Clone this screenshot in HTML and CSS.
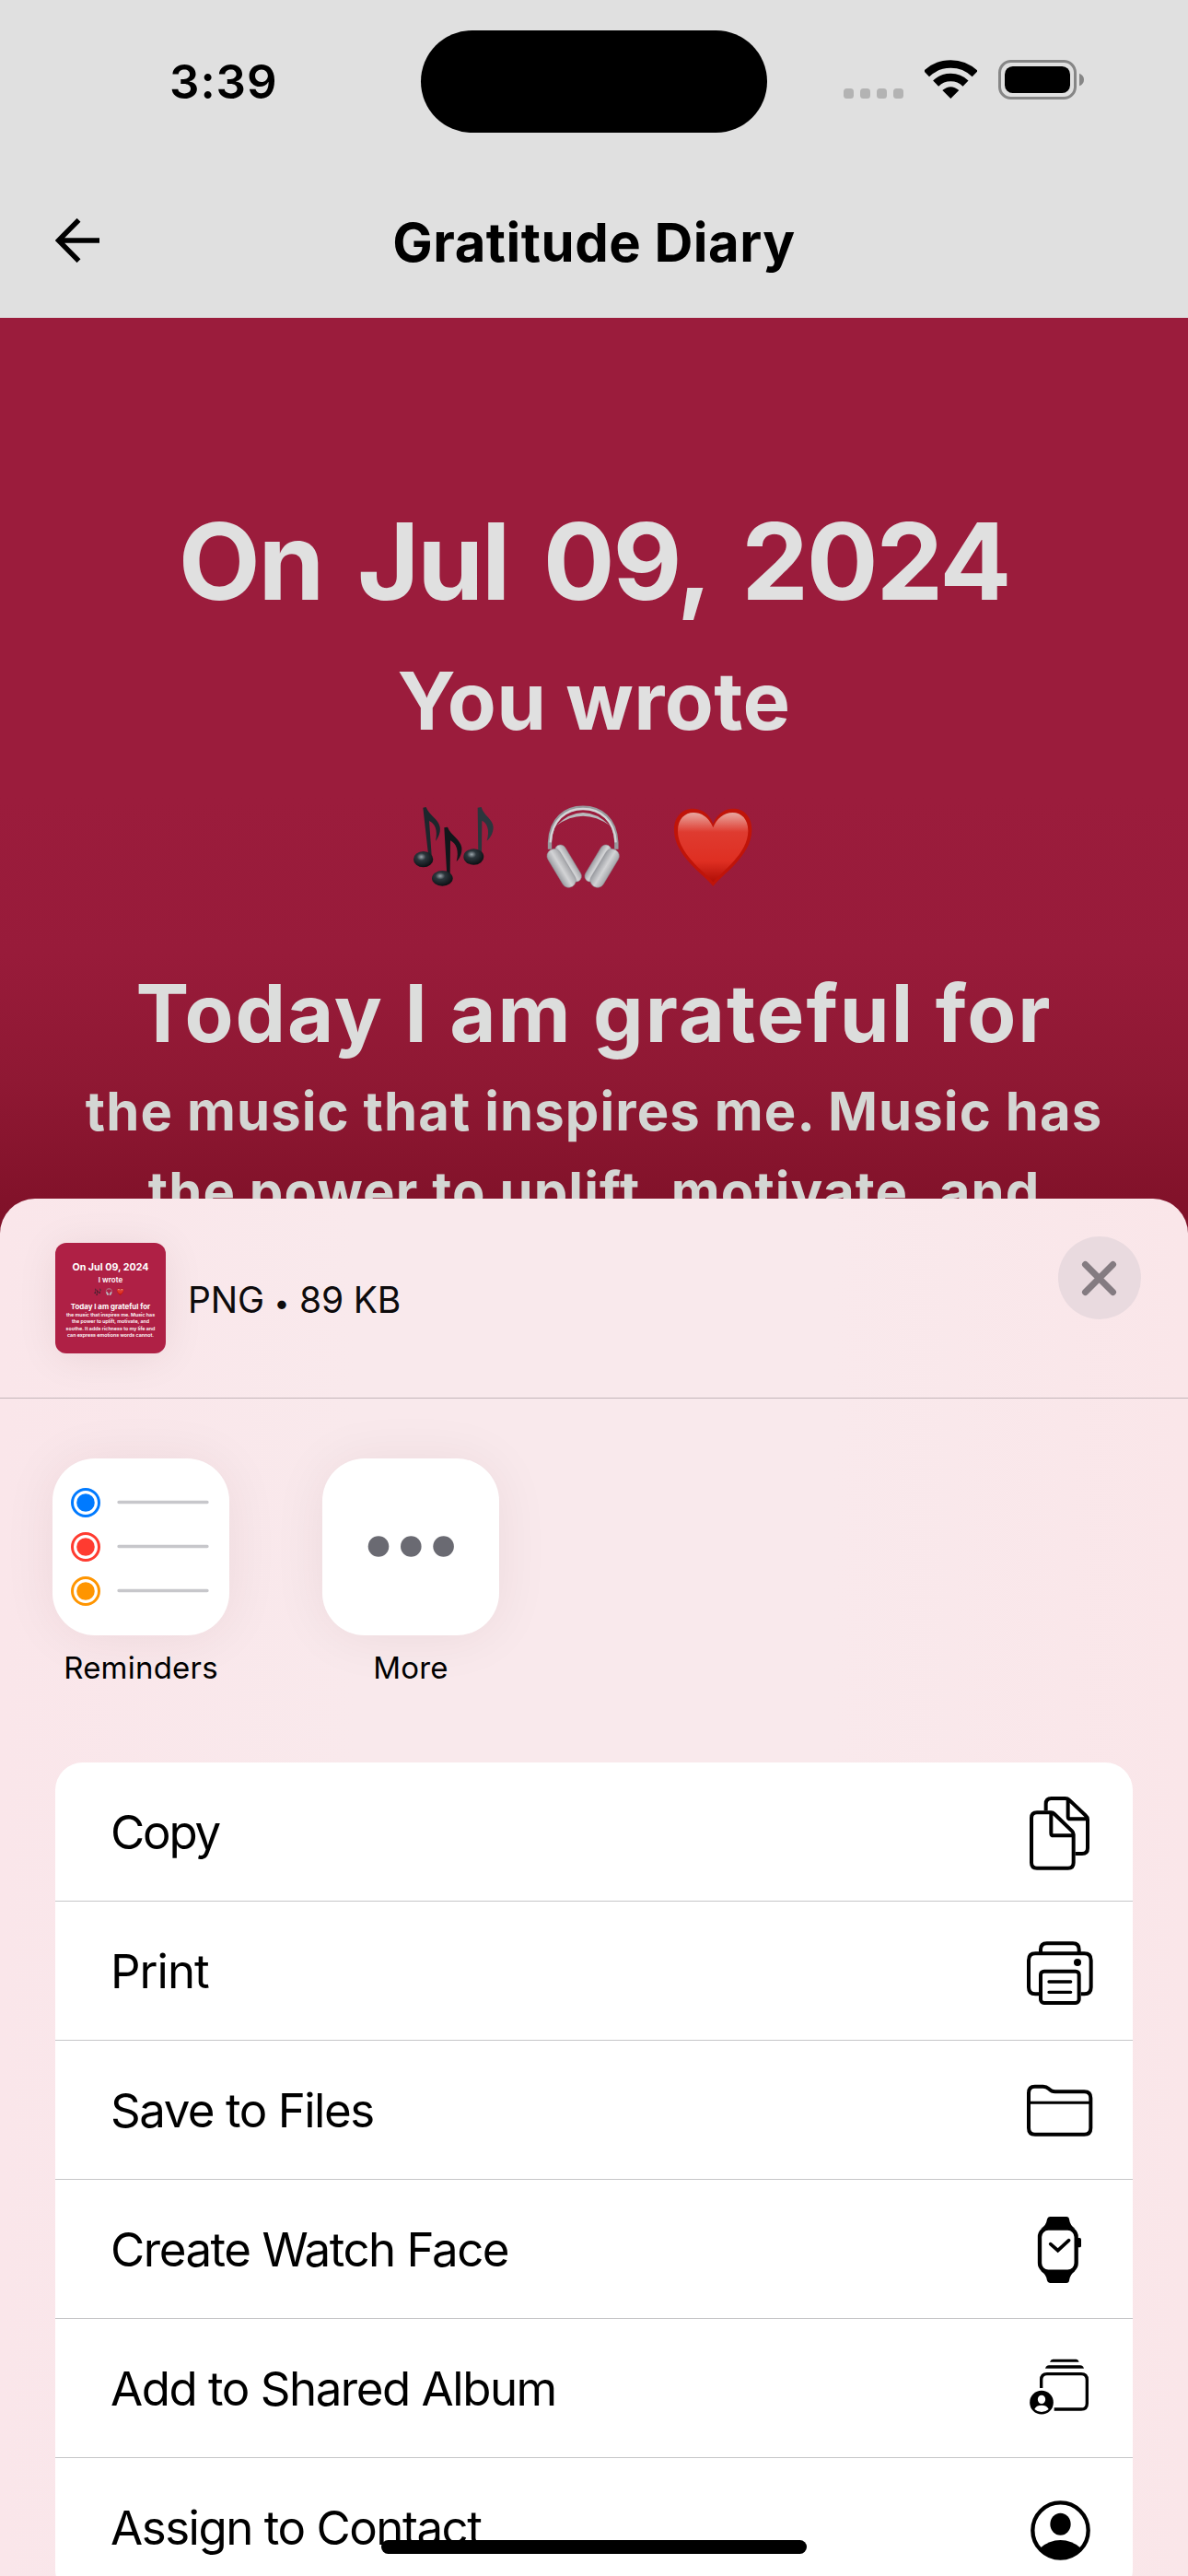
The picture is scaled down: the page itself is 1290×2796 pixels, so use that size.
FILE: index.html
```html
<!DOCTYPE html>
<html lang="en">
<head>
<meta charset="utf-8">
<title>Gratitude Diary</title>
<link rel="stylesheet" href="styles.css">
</head>
<body>
<div class="screen">
  <header class="status">
    <div class="status-time">3:39</div>
    <div class="island"></div>
    <div class="status-icons">
      <svg width="65" height="43" viewBox="0 0 65 43" fill="#b3b3b3"><rect y="31" width="11" height="11" rx="3.5"/><rect x="18" y="31" width="11" height="11" rx="3.5"/><rect x="36" y="31" width="11" height="11" rx="3.5"/><rect x="54" y="31" width="11" height="11" rx="3.5"/></svg>
      <svg width="57" height="43" viewBox="312 45 171 129"><path d="M318 90.4A113.5 113.5 0 0 1 476 90.4M348.400 121.700A70 70 0 0 1 445.600 121.700" fill="none" stroke="#000" stroke-width="26"/><path d="M397 171L370 144Q397 121 424 144Z"/></svg>
      <svg width="93" height="43" viewBox="552 45 279 129"><rect x="556.500" y="49.500" width="246" height="120" rx="37" fill="none" stroke="#868686" stroke-width="9"/><rect x="573" y="66" width="213" height="87" rx="26"/><path d="M816 89Q831 95 831 109.500Q831 124 816 130Z" fill="#868686"/></svg>
    </div>
  </header>
  <nav class="appbar">
    <svg class="back" width="48" height="48" viewBox="0 0 48 48" fill="none" stroke="#000" stroke-width="5.500"><path d="M25.500 1.800L3.500 24L25.500 46.200M3.500 24H48"/></svg>
    <h1 class="appbar-title">Gratitude Diary</h1>
  </nav>
  <main class="diary">
    <h2 class="diary-date">On Jul 09, 2024</h2>
    <p class="diary-sub">You wrote</p>
    <svg class="diary-emojis" width="390" height="115" viewBox="0 0 1170 345">
      <defs>
        <radialGradient id="ball" cx=".4" cy=".35" r=".65"><stop offset="0" stop-color="#9aa5ab"/><stop offset=".35" stop-color="#2c363c"/><stop offset="1" stop-color="#0c1014"/></radialGradient>
        <linearGradient id="silver" x1="0" y1="0" x2="1" y2="0"><stop offset="0" stop-color="#9b9da2"/><stop offset=".5" stop-color="#d3d4d6"/><stop offset="1" stop-color="#a4a5a9"/></linearGradient>
        <linearGradient id="heartfill" x1="0" y1="0" x2="0" y2="1"><stop offset="0" stop-color="#e8a8a0"/><stop offset=".28" stop-color="#df3b30"/><stop offset=".7" stop-color="#df2f22"/><stop offset="1" stop-color="#b00e06"/></linearGradient>
        <g id="emojis">
          <g fill="#1d262c">
            <path d="M58 50L68 48C78 76 108 86 113 113C116 132 106 150 99 159C107 124 97 101 78 93L86 205L76 210Z"/>
            <path d="M127 115L138 113C148 140 180 152 184 180C186 200 176 218 167 225C176 192 167 166 147 157L146 268L136 270Z" fill="#11161a"/>
            <path d="M236 50L248 48C255 76 286 87 287 113C287 133 276 150 266 158C276 124 268 101 250 92L249 200H238Z" fill="#2b363d"/>
          </g>
          <g fill="url(#ball)"><ellipse cx="59" cy="218" rx="32" ry="26"/><ellipse cx="121" cy="280" rx="34" ry="25"/><ellipse cx="223" cy="210" rx="33" ry="26"/></g>
          <path d="M471 185V163C474 87 522 50 579 50C637 50 685 87 688 163V185" fill="none" stroke="#98999d" stroke-width="13"/>
          <path d="M473 163C477 91 523 54 579 54C636 54 682 91 686 163" fill="none" stroke="#d4d5d7" stroke-width="7"/>
          <path d="M492 108Q579 24 667 108Q579 46 492 108Z" fill="#b9babd"/>
          <g fill="url(#silver)" stroke="#929398" stroke-width="1.500">
            <rect x="513" y="164" width="36" height="134" rx="18" transform="rotate(-31 531 231)"/>
            <rect x="486" y="178" width="46" height="138" rx="22" transform="rotate(-31 509 247)"/>
            <rect x="610" y="164" width="36" height="134" rx="18" transform="rotate(31 628 231)"/>
            <rect x="627" y="178" width="46" height="138" rx="22" transform="rotate(31 650 247)"/>
          </g>
          <path d="M1003 306C976 269 876 207 876 122C876 77 904 53 938 53C970 53 993 76 1003 103C1013 76 1036 53 1068 53C1102 53 1129 77 1129 122C1129 207 1030 269 1003 306Z" fill="#c01409"/>
          <path d="M1003 292C974 257 888 199 888 125C888 87 911 66 939 66C970 66 992 87 1003 115C1014 87 1036 66 1067 66C1095 66 1117 87 1117 125C1117 199 1032 257 1003 292Z" fill="url(#heartfill)"/>
        </g>
      </defs>
      <use href="#emojis"/>
    </svg>
    <p class="diary-lead">Today I am grateful for</p>
    <p class="diary-text">the music that inspires me. Music has<br>the power to uplift, motivate, and</p>
  </main>
  <section class="sheet">
    <div class="sheet-head">
      <div class="thumb">
        <div class="thumb-date">On Jul 09, 2024</div>
        <div class="thumb-sub">I wrote</div>
        <svg class="thumb-emojis" width="35" height="10" viewBox="0 0 1170 345"><use href="#emojis"/></svg>
        <div class="thumb-lead">Today I am grateful for</div>
        <div class="thumb-text">the music that inspires me. Music has<br>the power to uplift, motivate, and<br>soothe. It adds richness to my life and<br>can express emotions words cannot.</div>
      </div>
      <div class="file-info">PNG <span class="bullet">•</span> 89 KB</div>
      <div class="close"><svg width="90" height="90" viewBox="0 0 90 90" stroke="#847b81" stroke-width="7" stroke-linecap="round"><path d="M29.500 30.500L59.500 60.500M59.500 30.500L29.500 60.500"/></svg></div>
    </div>
    <div class="apps">
      <div class="app">
        <div class="tile">
          <svg width="192" height="192" viewBox="0 0 192 192">
            <g fill="none" stroke-width="3"><circle cx="36" cy="48" r="14.500" stroke="#007aff"/><circle cx="36" cy="96" r="14.500" stroke="#ff3b30"/><circle cx="36" cy="144" r="14.500" stroke="#ff9500"/></g>
            <circle cx="36" cy="48" r="9.800" fill="#007aff"/><circle cx="36" cy="96" r="9.800" fill="#ff3b30"/><circle cx="36" cy="144" r="9.800" fill="#ff9500"/>
            <path d="M72 47.500H168M72 95.500H168M72 143.500H168" stroke="#c7c7cb" stroke-width="3.300" stroke-linecap="round"/>
          </svg>
        </div>
        <div class="app-name">Reminders</div>
      </div>
      <div class="app">
        <div class="tile">
          <svg width="192" height="192" viewBox="0 0 192 192" fill="#6a6a72"><circle cx="61" cy="95.500" r="11.300"/><circle cx="96.300" cy="95.500" r="11.300"/><circle cx="131.600" cy="95.500" r="11.300"/></svg>
        </div>
        <div class="app-name">More</div>
      </div>
    </div>
    <ul class="actions">
      <li class="action"><span class="tight">Copy</span>
        <svg class="icon" viewBox="90 39 243 450"><path d="M138 202H184Q190 202 195 207L252 262Q257 267 257 273V365Q257 383 239 383H138Q120 383 120 365V220Q120 202 138 202ZM184 202V269Q184 277 192 277H257"/><path d="M167 196V174Q167 156 185 156H230Q238 156 243 161L297 212Q303 217 303 224V318Q303 336 285 336H263M239 156V215Q239 223 247 223H303"/></svg></li>
      <li class="action"><span class="loose">Print</span>
        <svg class="icon" viewBox="90 492 243 450"><path d="M144 793H133Q111 793 111 771V683Q111 661 133 661H292Q314 661 314 683V771Q314 793 292 793H281"/><rect x="150" y="719" width="125" height="103" rx="11"/><path d="M150 661V648Q150 628 170 628H255Q275 628 275 648V661"/><path d="M177 753H248M177 787H248" stroke-width="10" stroke-linecap="round"/><circle class="solid" cx="270" cy="690" r="12"/></svg></li>
      <li class="action"><span>Save to Files</span>
        <svg class="icon" viewBox="90 945 243 450"><path d="M131 1094H158Q168 1094 177 1102Q186 1111 197 1111H292Q313 1111 313 1132V1229Q313 1250 292 1250H132Q111 1250 111 1229V1115Q111 1094 131 1094Z"/><path d="M111 1147H313" stroke-width="9"/></svg></li>
      <li class="action"><span>Create Watch Face</span>
        <svg class="icon" viewBox="90 48 243 450"><rect x="147" y="206" width="119" height="141" rx="28" stroke-width="13"/><path class="solid" d="M180 168H234Q242 168 243 176Q246 197 262 206H151Q168 197 171 176Q173 168 180 168ZM180 384H234Q242 384 243 376Q246 355 262 346H151Q168 355 171 376Q173 384 180 384Z"/><rect class="solid" x="268" y="237" width="14" height="31" rx="5"/><path d="M182 257L206 278L242 245" stroke-width="11" stroke-linecap="round"/></svg></li>
      <li class="action"><span>Add to Shared Album</span>
        <svg class="icon" viewBox="90 501 243 450"><path d="M152 726V699Q152 680 171 680H282Q301 680 301 699V776Q301 795 282 795H194" stroke-width="10"/><path class="solid" d="M165 662Q169 652 177 652H279Q287 652 291 662ZM180 641Q183 632 190 632H266Q272 632 275 641Z"/><circle class="solid" cx="153" cy="773" r="38.500"/><path class="hole" d="M153 749A12.500 14 0 0 1 153 777A12.500 14 0 0 1 153 749ZM130 795Q135 782 153 782Q171 782 176 795Q166 804 153 804Q140 804 130 795Z"/></svg></li>
      <li class="action"><span>Assign to Contact</span>
        <svg class="icon" viewBox="90 954 243 450"><circle cx="214.500" cy="1186.500" r="90.500" stroke-width="13"/><ellipse class="solid" cx="214.500" cy="1166.500" rx="33.500" ry="36"/><path class="solid" d="M148 1244Q178 1218 214.500 1218Q251 1218 281 1244Q252 1279 214.500 1279Q177 1279 148 1244Z"/></svg></li>
    </ul>
  </section>
  <div class="home-indicator"></div>
</div>
</body>
</html>
```
FILE: styles.css
```css
* { box-sizing: border-box; }

body {
  margin: 0;
  background: #e0e0e0;
  color: #000;
  font-family: Inter, "Liberation Sans", sans-serif;
}

h1, h2, p, ul { margin: 0; padding: 0; font-weight: inherit; }

svg { display: block; flex: none; }

.screen {
  position: relative;
  width: 1290px;
  height: 2796px;
  overflow: hidden;
}

/* Status bar */
.status {
  display: grid;
  grid-template-columns: 457px 376px 1fr;
  align-items: center;
  height: 177px;
}
.status-time {
  padding-left: 184px;
  font-size: 51px;
  font-weight: 600;
  letter-spacing: 0.95px;
  line-height: 60px;
}
.island { height: 111px; border-radius: 56px; background: #000; }
.status-icons { display: flex; gap: 23px; padding: 0 0 4px 83px; }

/* App bar */
.appbar {
  display: grid;
  grid-template-columns: 150px 1fr 150px;
  align-items: center;
  height: 168px;
}
.back { margin-left: 60px; }
.appbar-title {
  padding-top: 4px;
  text-align: center;
  font-size: 58px;
  font-weight: 700;
  letter-spacing: 0.5px;
}

/* Diary page, dimmed towards the share sheet */
.diary {
  height: 1010px;
  padding-top: 194px;
  overflow: hidden;
  text-align: center;
  white-space: nowrap;
  font-weight: 700;
  color: #e0e0e0;
  background: linear-gradient(#9b1c3c 520px, #981b3a 690px, #8f1833 830px, #82122a 956px, #7d1128);
}
.diary-date { font-size: 115.5px; line-height: 140px; letter-spacing: -2.2px; word-spacing: 12.5px; }
.diary-sub { margin-top: 29px; font-size: 86.6px; line-height: 105px; letter-spacing: 0.36px; }
.diary-emojis { margin: 47px auto 72px 440px; }
.diary-lead { font-size: 86.6px; line-height: 105px; letter-spacing: 1.98px; color: #dcdddc; }
.diary-text { margin-top: 11px; font-size: 58px; line-height: 87px; letter-spacing: 1.1px; color: #d4d6d3; }

/* Share sheet */
.sheet {
  position: relative;
  height: 1549px;
  margin-top: -54px;
  border-radius: 38px 38px 0 0;
  background: linear-gradient(90deg, #fae6ea, #f9e9ec 30%, #f9e9ec 70%, #fae6e9);
}
.sheet-head {
  display: flex;
  align-items: flex-start;
  height: 217px;
  padding: 41px 51px 0 60px;
  border-bottom: 1px solid #c4b6ba;
}
.thumb {
  width: 120px;
  height: 120px;
  margin-top: 7px;
  padding-top: 20px;
  border-radius: 12px;
  background: #af2045;
  box-shadow: 0 4px 45px rgba(60, 20, 30, 0.08);
  color: #fff;
  text-align: center;
  white-space: nowrap;
  font-weight: 700;
}
.thumb-date { font-size: 10.7px; line-height: 14px; }
.thumb-sub { font-size: 8px; font-weight: 600; line-height: 12px; }
.thumb-emojis { margin: 2px 0 5px 41px; }
.thumb-lead { font-size: 7.9px; line-height: 12px; }
.thumb-text { font-size: 5.3px; font-weight: 600; line-height: 7.4px; }
.file-info {
  margin: 43px auto 0 24px;
  font-size: 39px;
  line-height: 52px;
  letter-spacing: -0.2px;
  color: #0d0b0c;
}
.bullet { font-size: 30px; }
.close { width: 90px; height: 90px; border-radius: 50%; background: #e9dadf; }

.apps { display: flex; gap: 101px; padding: 65px 57px 83px; }
.app { width: 192px; text-align: center; }
.tile {
  width: 192px;
  height: 192px;
  border-radius: 46px;
  background: #fff;
  box-shadow: 0 2px 60px rgba(60, 20, 30, 0.065);
}
.app-name { margin-top: 15px; font-size: 33px; line-height: 40px; letter-spacing: 0.22px; }

.actions {
  width: 1170px;
  margin: 0 auto;
  list-style: none;
  border-radius: 30px;
  background: #fff;
}
.action {
  display: flex;
  align-items: center;
  justify-content: space-between;
  height: 151px;
  padding: 0 39px 0 60px;
  border-bottom: 1px solid #c6c6c8;
  font-size: 51px;
  letter-spacing: -1.48px;
}
.action:last-child { border-bottom: 0; }
.tight { letter-spacing: -2.2px; }
.loose { letter-spacing: -1px; }
.icon { width: 81px; height: 150px; fill: none; stroke: #000; stroke-width: 12; }
.icon .solid { fill: #000; stroke: none; }
.icon .hole { fill: #fff; stroke: none; }

.home-indicator {
  position: absolute;
  left: 414px;
  top: 2757px;
  width: 462px;
  height: 15px;
  border-radius: 8px;
  background: #000;
}
```
